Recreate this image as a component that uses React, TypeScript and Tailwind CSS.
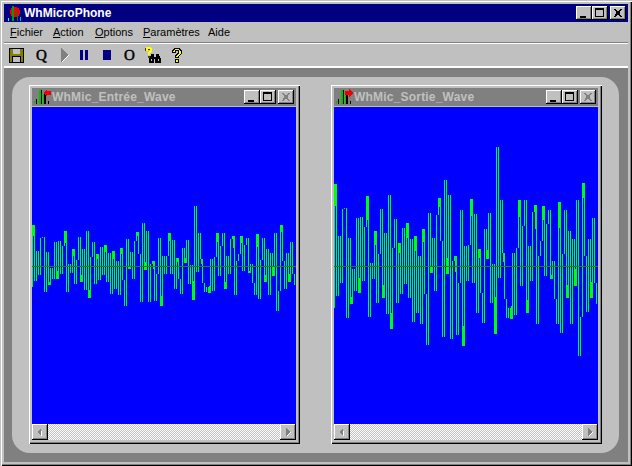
const samples = [
  505, 135, 470, 290, 432, 210, 205, 535, 295, 495, 390, 455, 235, 460, 232, 425, 262, 170, 533, 370,
  420, 275, 490, 345, 208, 475, 280, 525, 168, 570, 325, 238, 490, 310, 465, 265, 435, 252, 475, 300,
  548, 290, 520, 350, 555, 270, 465, 617, 220, 400, 295, 455, 228, 175, 305, 593, 123, 405, 168, 598,
  365, 350, 587, 430, 213, 620, 320, 425, 318, 180, 430, 225, 520, 330, 460, 550, 270, 360, 222, 490,
  375, 585, 22, 415, 183, 340, 480, 535, 505, 540, 340, 527, 325, 183, 440, 260, 183, 520, 320, 425,
  218, 198, 553, 350, 305, 200, 410, 255, 213, 420, 365, 480, 553, 188, 580, 345, 213, 475, 275, 553,
  300, 440, 183, 650, 532, 132, 350, 518, 300, 475, 235, 430, 495,
];

function Wave({ gain }: { gain: number }) {
  const y = (v: number) => Math.round(159 - (gain * (380 - v)) / 3);
  // each step is one tall column, then a short stub in the next column
  let d = '';
  for (let i = 0; i < samples.length - 1; i++) {
    const a = y(samples[i]);
    const b = y(samples[i + 1]);
    d += `M${i * 2 + 0.5} ${a}V${b}`;
    if (i < samples.length - 2 && i % 4 === 0) {
      const c = y(samples[i + 2]);
      d += `M${i * 2 + 1.5} ${b}V${Math.round(b + (c - b) * 0.2)}`;
    }
  }
  return (
    <svg width="264" height="317" className="block bg-[#0000ff]" shapeRendering="crispEdges">
      <path d={d} fill="none" stroke="#00ff00" strokeWidth="1" />
      <rect x="0" y="159" width="264" height="1" fill="#308000" />
    </svg>
  );
}

const raised = 'bg-[#c0c0c0] shadow-[inset_-1px_-1px_0_#000,inset_1px_1px_0_#fff,inset_-2px_-2px_0_#808080]';

function CaptionButton({ type, dim }: { type: 'min' | 'max' | 'close'; dim?: boolean }) {
  return (
    <div className={`w-4 h-[14px] flex items-center justify-center ${raised}`}>
      <svg width="16" height="14" shapeRendering="crispEdges">
        {type === 'min' && <rect x="4" y="10" width="6" height="2" fill="#000" />}
        {type === 'max' && (
          <path d="M3 2h9v9H3z M4 4v6h7V4z" fill="#000" fillRule="evenodd" />
        )}
        {type === 'close' && (
          <path
            d="M4 3l7 8M5 3l7 8M11 3l-7 8M12 3l-7 8"
            stroke={dim ? '#808080' : '#000'}
            strokeWidth="1"
            fill="none"
          />
        )}
      </svg>
    </div>
  );
}

function MainIcon() {
  return (
    <svg width="16" height="16" shapeRendering="crispEdges" className="block">
      <circle cx="9" cy="7" r="5" fill="#f00000" />
      <rect x="6" y="1" width="2" height="15" fill="#00a000" />
      <rect x="11" y="6" width="1" height="10" fill="#008000" />
      <rect x="14" y="12" width="1" height="4" fill="#00c0a0" />
      <rect x="2" y="13" width="1" height="3" fill="#00ffff" />
    </svg>
  );
}

function ChildIcon({ dir }: { dir: 'left' | 'right' }) {
  return (
    <svg width="17" height="16" shapeRendering="crispEdges" className="block">
      <rect x="2" y="10" width="1" height="5" fill="#000" />
      <rect x="0" y="12" width="1" height="3" fill="#00c000" />
      <rect x="5" y="1" width="2" height="14" fill="#00c000" />
      <rect x="7" y="1" width="1" height="14" fill="#000" />
      <rect x="10" y="5" width="2" height="10" fill="#000" />
      <rect x="9" y="5" width="1" height="10" fill="#00c000" />
      <rect x="14" y="12" width="1" height="3" fill="#000" />
      {dir === 'left' ? (
        <path d="M9 4l4-4v2h4v4h-4v2z" fill="#f00000" />
      ) : (
        <path d="M9 2h4V0l4 4-4 4V6H9z" fill="#f00000" />
      )}
    </svg>
  );
}

function ScrollArrow({ dir }: { dir: 'left' | 'right' }) {
  return (
    <div className={`w-4 h-4 flex items-center justify-center ${raised}`}>
      <svg width="16" height="16" shapeRendering="crispEdges">
        {dir === 'left' ? (
          <>
            <path d="M9 4v8L5 8z" fill="#808080" />
            <path d="M9 12h1V7H9z" fill="#fff" />
          </>
        ) : (
          <>
            <path d="M6 4v8l4-4z" fill="#808080" />
            <path d="M6 12l4-4 1 0-4 5z" fill="#fff" />
          </>
        )}
      </svg>
    </div>
  );
}

function ChildWindow({ title, gain, dir }: { title: string; gain: number; dir: 'left' | 'right' }) {
  return (
    <div className="w-[272px] h-[360px] p-1 bg-[#c0c0c0] shadow-[inset_1px_1px_0_#c0c0c0,inset_2px_2px_0_#fff,inset_-1px_-1px_0_#000,inset_-2px_-2px_0_#808080] flex flex-col">
      <div className="h-[19px] bg-[#808080] flex items-center pl-[2px] pr-[2px] pb-[1px] border-b border-[#c0c0c0]">
        <ChildIcon dir={dir} />
        <span className="ml-[1px] text-[12px] leading-none font-bold text-[#c0c0c0] tracking-[0.2px]">{title}</span>
        <div className="ml-auto flex items-center">
          <CaptionButton type="min" />
          <CaptionButton type="max" />
          <div className="ml-[2px]">
            <CaptionButton type="close" dim />
          </div>
        </div>
      </div>
      <Wave gain={gain} />
      <div className="h-4 flex bg-[repeating-conic-gradient(#c0c0c0_0_25%,#fff_0_50%)] bg-size-[2px_2px]">
        <ScrollArrow dir="left" />
        <div className="flex-1" />
        <ScrollArrow dir="right" />
      </div>
    </div>
  );
}

function Floppy() {
  return (
    <svg width="15" height="15" shapeRendering="crispEdges" className="block">
      <path d="M0 0h14l1 1v14H0z" fill="#000" />
      <rect x="1" y="1" width="13" height="13" fill="#808000" />
      <rect x="4" y="1" width="7" height="5" fill="#c0c0c0" />
      <rect x="3" y="8" width="9" height="6" fill="#000" />
      <rect x="4" y="9" width="7" height="5" fill="#c0c0c0" />
    </svg>
  );
}

function QuestionMark() {
  return (
    <>
      <path d="M2 0h6v1h1v1h1v4H9v1H8v1H7v2H3V7h1V6h1V5h1V3H4v2H0V2h1V1h1z" fill="#000" />
      <path d="M3 1h4v1h1v1h1v3H8v1H7v1H6v1H4V8h1V7h1V6h1V2H3v2H1V3h1V2h1z" fill="#ffff00" />
      <path d="M3 11h4v4H3z" fill="#000" />
      <path d="M4 12h2v2H4z" fill="#ffff00" />
    </>
  );
}

function Toolbar() {
  return (
    <div className="h-[22px] flex items-center pl-[5px] text-black">
      <Floppy />
      <span className="ml-[12px] w-[11px] text-[15px] leading-none font-['Liberation_Serif',serif] [-webkit-text-stroke:0.5px_#000]">Q</span>
      <svg width="8" height="14" shapeRendering="crispEdges" className="ml-[14px] block">
        <path d="M0 0v14l7-7z" fill="#808080" />
        <path d="M1 13l6-6 1 0-7 7z" fill="#fff" />
      </svg>
      <svg width="9" height="10" shapeRendering="crispEdges" className="ml-[11px] block">
        <rect x="0" y="0" width="3" height="10" fill="#000080" />
        <rect x="5" y="0" width="3" height="10" fill="#000080" />
      </svg>
      <div className="ml-[14px] w-2 h-[10px] bg-[#000080]" />
      <span className="ml-[13px] w-[11px] text-[15px] leading-none font-['Liberation_Serif',serif] [-webkit-text-stroke:0.5px_#000]">O</span>
      <svg width="18" height="17" shapeRendering="crispEdges" className="ml-[10px] block">
        <path d="M1 0h5v1h1v4H6v1H5v2H3V5h1V4h1V2H3v2H1z" fill="#ffff00" />
        <path d="M0 1h1v3H0zM3 2h2v1H3zM3 9h2v2H3z" fill="#404000" />
        <path d="M6 7h3v2h2V7h3v2h1v2h1v5h-6v-4H9v4H4v-5h1V9h1z" fill="#000" />
        <path d="M6 12h1v2H6zM13 12h1v2h-1zM9 9h2v1H9z" fill="#c0c0c0" />
      </svg>
      <svg width="10" height="15" shapeRendering="crispEdges" className="ml-[9px] block">
        <QuestionMark />
      </svg>
    </div>
  );
}

function MenuLabel({ first, rest, className }: { first: string; rest: string; className: string }) {
  return (
    <span className={className}>
      <span className="underline underline-offset-1">{first}</span>
      {rest}
    </span>
  );
}

export default function App() {
  return (
    <div className="w-[632px] h-[466px] p-1 flex flex-col overflow-hidden bg-[#c0c0c0] font-['Liberation_Sans',sans-serif] shadow-[inset_1px_1px_0_#c0c0c0,inset_2px_2px_0_#fff,inset_-1px_-1px_0_#000,inset_-2px_-2px_0_#808080]">
      <div className="h-[18px] shrink-0 bg-[#000080] flex items-center pl-[2px] pr-[2px]">
        <MainIcon />
        <span className="ml-[2px] text-[12px] leading-none font-bold text-white">WhMicroPhone</span>
        <div className="ml-auto flex items-center">
          <CaptionButton type="min" />
          <CaptionButton type="max" />
          <div className="ml-[2px]">
            <CaptionButton type="close" />
          </div>
        </div>
      </div>
      <div className="h-5 shrink-0 flex items-center pl-[6px] text-[11px] leading-none text-black">
        <MenuLabel first="F" rest="ichier" className="w-[43px]" />
        <MenuLabel first="A" rest="ction" className="w-[42px]" />
        <MenuLabel first="O" rest="ptions" className="w-[48px]" />
        <MenuLabel first="P" rest="aramètres" className="w-[65px]" />
        <span>Aide</span>
      </div>
      <div className="h-[2px] shrink-0 border-t border-[#808080] border-b-1 border-b-white" />
      <Toolbar />
      <div className="h-[2px] shrink-0 bg-white" />
      <div className="flex-1 min-h-0 bg-[#808080] pt-[9px] pb-[9px] pl-2 pr-[9px]">
        <div className="h-full rounded-[18px] bg-[#c0c0c0] pt-[7px] pl-4 pr-[17px] flex justify-between">
          <ChildWindow title="WhMic_Entrée_Wave" gain={0.5} dir="left" />
          <ChildWindow title="WhMic_Sortie_Wave" gain={1} dir="right" />
        </div>
      </div>
    </div>
  );
}
